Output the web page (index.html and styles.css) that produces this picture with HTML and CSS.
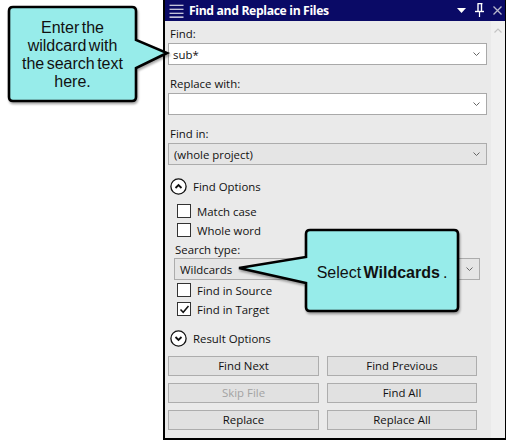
FILE: index.html
```html
<!DOCTYPE html>
<html>
<head>
<meta charset="utf-8">
<link rel="stylesheet" href="styles.css">
</head>
<body>
<div class="stage">
  <div class="panel">
    <div class="titlebar">
      <svg class="menu-icon" width="16" height="16" viewBox="0 0 16 16">
        <path d="M0 1.5H16M0 6H16M0 10.5H16M0 15H16" stroke="#fff" stroke-width="1.2"/>
      </svg>
      <span class="title">Find and Replace in Files</span>
      <div class="title-tools">
        <svg width="9" height="6" viewBox="0 0 9 6"><polygon points="0,0 9,0 4.5,5" fill="#fff"/></svg>
        <svg width="9" height="14" viewBox="0 0 9 14">
          <path d="M2.5 0.5H7.5M3 0.5V8M6.5 0.5V8" stroke="#fff" stroke-width="1.4" fill="none"/>
          <path d="M0 8.5H9" stroke="#fff" stroke-width="1.4"/>
          <path d="M4.5 8.5V14" stroke="#fff" stroke-width="1.2"/>
        </svg>
        <svg width="9" height="9" viewBox="0 0 9 9"><path d="M0.5 0.5L8.5 8.5M8.5 0.5L0.5 8.5" stroke="#b8b8cc" stroke-width="1.3"/></svg>
      </div>
    </div>
    <div class="body">
      <div class="content">
        <div class="label">Find:</div>
        <div class="field white"><span>sub*</span><svg class="chev" width="7" height="4" viewBox="0 0 7 4"><path d="M0.5 0.5L3.5 3.5L6.5 0.5" stroke="#666" fill="none"/></svg></div>

        <div class="label gap">Replace with:</div>
        <div class="field white"><span></span><svg class="chev" width="7" height="4" viewBox="0 0 7 4"><path d="M0.5 0.5L3.5 3.5L6.5 0.5" stroke="#666" fill="none"/></svg></div>

        <div class="label gap">Find in:</div>
        <div class="field gray"><span>(whole project)</span><svg class="chev" width="7" height="4" viewBox="0 0 7 4"><path d="M0.5 0.5L3.5 3.5L6.5 0.5" stroke="#666" fill="none"/></svg></div>

        <div class="section-head first">
          <svg width="17" height="17" viewBox="0 0 17 17"><circle cx="8.5" cy="8.5" r="7.6" stroke="#111" stroke-width="1.3" fill="#fff"/><path d="M5.5 10L8.5 7L11.5 10" stroke="#111" stroke-width="1.8" fill="none"/></svg>
          <span>Find Options</span>
        </div>

        <div class="options">
          <div class="check first"><span class="box"></span><span>Match case</span></div>
          <div class="check"><span class="box"></span><span>Whole word</span></div>
          <div class="label small">Search type:</div>
          <div class="field gray combo"><span>Wildcards</span><svg class="chev" width="7" height="4" viewBox="0 0 7 4"><path d="M0.5 0.5L3.5 3.5L6.5 0.5" stroke="#666" fill="none"/></svg></div>
          <div class="check after-combo"><span class="box"></span><span>Find in Source</span></div>
          <div class="check"><span class="box"><svg width="11" height="11" viewBox="0 0 11 11"><path d="M1.5 5.5L4.2 8.3L9.5 2" stroke="#111" stroke-width="1.5" fill="none"/></svg></span><span>Find in Target</span></div>
        </div>

        <div class="section-head second">
          <svg width="17" height="17" viewBox="0 0 17 17"><circle cx="8.5" cy="8.5" r="7.6" stroke="#111" stroke-width="1.3" fill="#fff"/><path d="M5.5 7L8.5 10L11.5 7" stroke="#111" stroke-width="1.8" fill="none"/></svg>
          <span>Result Options</span>
        </div>

        <div class="buttons">
          <div class="btn">Find Next</div>
          <div class="btn">Find Previous</div>
          <div class="btn disabled">Skip File</div>
          <div class="btn">Find All</div>
          <div class="btn">Replace</div>
          <div class="btn">Replace All</div>
        </div>
      </div>
      <div class="scrollbar">
        <svg width="8" height="5" viewBox="0 0 8 5"><path d="M0.5 4.5L4 1L7.5 4.5" stroke="#c4c4c4" stroke-width="1.2" fill="none"/></svg>
      </div>
    </div>
  </div>

  <div class="callout callout-one">
    <svg class="callout-shape" width="180" height="112" viewBox="0 0 180 112">
      <path d="M13 7H132Q136 7 136 11V40L167 53L136 68V97Q136 101 132 101H13Q9 101 9 97V11Q9 7 13 7Z" fill="#97ecea" stroke="#000" stroke-width="2.6" stroke-linejoin="miter"/>
    </svg>
    <div class="callout-text one">Enter the<br>wildcard with<br>the search text<br>here.</div>
  </div>

  <div class="callout callout-two">
    <svg class="callout-shape" width="230" height="90" viewBox="0 0 230 90">
      <path d="M72 2H216Q220 2 220 6V79Q220 83 216 83H72Q68 83 68 79V55L1 40L68 29V6Q68 2 72 2Z" fill="#97ecea" stroke="#000" stroke-width="2.6"/>
    </svg>
    <div class="callout-text two">Select <b>Wildcards</b><span class="dot">.</span></div>
  </div>
</div>
</body>
</html>
```

FILE: styles.css
```css
* { box-sizing: border-box; }

html, body {
  margin: 0;
  padding: 0;
  background: #fff;
}

body {
  width: 506px;
  height: 441px;
  overflow: hidden;
  font-family: "Open Sans", "Noto Sans", sans-serif;
  font-size: 11.4px;
  color: #111;
}

.stage {
  position: relative;
  width: 506px;
  height: 441px;
  padding-left: 163px;
}

.panel {
  width: 343px;
  height: 440px;
  border-left: 2px solid #000;
  border-right: 1px solid #000;
  border-bottom: 2px solid #000;
  display: flex;
  flex-direction: column;
  background: #eaeaea;
}

.titlebar {
  height: 21px;
  background: #0a0a66;
  display: flex;
  align-items: center;
  padding-left: 4px;
  color: #fff;
}

.menu-icon { width: 15px; height: 14px; margin-top: 1px; }

.title {
  margin-left: 5px;
  font-weight: 700;
  font-size: 12.2px;
  letter-spacing: -0.35px;
  line-height: 21px;
}

.title-tools {
  margin-left: auto;
  display: flex;
  align-items: center;
  gap: 9px;
  padding-right: 3px;
}

.title-tools svg:nth-child(1) { margin-top: 1px; }
.title-tools svg:nth-child(2) { margin-top: -2px; }

.body {
  flex: 1;
  display: flex;
}

.content {
  flex: 1;
  padding: 5px 4px 0 3px;
  display: flex;
  flex-direction: column;
}

.scrollbar {
  width: 14px;
  background: #f0f0f0;
  display: flex;
  justify-content: center;
  padding-top: 7px;
}

.scrollbar svg { display: block; }

.label {
  height: 16px;
  line-height: 16px;
  padding-left: 2px;
  margin-bottom: 1px;
}

.label.gap { margin-top: 11px; }

.field {
  height: 22px;
  border: 1px solid #a9a9a9;
  display: flex;
  align-items: center;
  padding: 0 6px 0 4px;
}

.field span { flex: 1; }

.field.white { background: #fff; }
.field.gray { background: #e5e5e5; border-color: #acacac; padding-left: 5px; }

.chev { display: block; }

.section-head {
  display: flex;
  align-items: center;
  height: 18px;
  padding-left: 2px;
  gap: 6px;
}

.section-head svg { display: block; }

.section-head.first { margin-top: 12px; }
.section-head.second { margin-top: 12px; }

.options {
  padding-left: 6px;
  padding-right: 7px;
  display: flex;
  flex-direction: column;
}

.check {
  height: 16px;
  display: flex;
  align-items: center;
  gap: 6px;
  padding-left: 3px;
  margin-top: 3px;
}

.check.first { margin-top: 8px; }
.check.after-combo { margin-top: 2px; }

.box {
  width: 14px;
  height: 14px;
  border: 1px solid #333;
  background: #fff;
  display: flex;
  align-items: center;
  justify-content: center;
}

.box svg { display: block; }

.label.small {
  margin-top: 4px;
  margin-bottom: 0;
  padding-left: 1px;
}

.combo { height: 22px; }

.buttons {
  margin-top: 9px;
  display: grid;
  grid-template-columns: 151px 150px;
  column-gap: 8px;
  row-gap: 7px;
}

.btn {
  height: 20px;
  border: 1px solid #adadad;
  background: #e1e1e1;
  text-align: center;
  line-height: 18px;
}

.btn.disabled { color: #a3a3a3; }

.callout {
  position: absolute;
}

.callout-one {
  left: 0;
  top: 0;
  width: 180px;
  height: 112px;
}

.callout-two {
  left: 238px;
  top: 228px;
  width: 230px;
  height: 90px;
}

.callout-shape {
  position: absolute;
  left: 0;
  top: 0;
  filter: drop-shadow(1px 2px 1px rgba(0, 0, 0, 0.35));
}

.callout-text {
  position: absolute;
  font-family: "Liberation Sans", Arial, sans-serif;
  font-size: 16px;
  color: #111;
  text-align: center;
}

.callout-text.one {
  left: 9px;
  top: 19px;
  width: 127px;
  line-height: 18px;
  word-spacing: -2px;
}

.callout-text.two {
  left: 68px;
  top: 36px;
  width: 152px;
  line-height: 18px;
  word-spacing: -2px;
}

.callout-text .dot { margin-left: 3px; }
```
